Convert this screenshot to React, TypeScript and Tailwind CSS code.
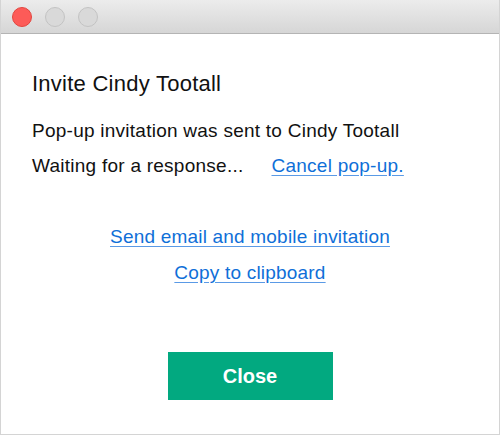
export default function App() {
  return (
    <div className="w-[500px] h-[435px] bg-white border-x border-b border-[#d4d4d4] font-['Liberation_Sans',Arial,sans-serif] text-[#111] flex flex-col">
      <div className="h-[34px] shrink-0 bg-gradient-to-b from-[#ececec] to-[#d6d6d6] border-b border-[#b4b4b4] flex items-center gap-[13px] pl-[11px]">
        <span className="w-[20px] h-[20px] rounded-full bg-[#fd5b58] border border-[#e2463f]" />
        <span className="w-[20px] h-[20px] rounded-full bg-[#d9d9d9] border border-[#c3c3c3]" />
        <span className="w-[20px] h-[20px] rounded-full bg-[#d9d9d9] border border-[#c3c3c3]" />
      </div>

      <div className="flex flex-col flex-1 pt-[37px]">
        <div className="px-[31px]">
          <h1 className="text-[22px] leading-[26px] tracking-[0.25px]">Invite Cindy Tootall</h1>
          <p className="mt-[23px] text-[19px] leading-[22px] tracking-[0.25px]">
            Pop-up invitation was sent to Cindy Tootall
          </p>
          <div className="mt-[13px] flex text-[19px] leading-[22px] tracking-[0.25px]">
            <span>Waiting for a response...</span>
            <a
              href="#"
              className="ml-[28px] text-[#0f6fd8] underline decoration-[#5a9ae6] underline-offset-[3px]"
            >
              Cancel pop-up.
            </a>
          </div>
        </div>

        <div className="mt-[49px] flex flex-col items-center gap-[14px] text-[19px] leading-[22px] tracking-[0.2px]">
          <a
            href="#"
            className="text-[#0f6fd8] underline decoration-[#5a9ae6] underline-offset-[3px]"
          >
            Send email and mobile invitation
          </a>
          <a
            href="#"
            className="text-[#0f6fd8] underline decoration-[#5a9ae6] underline-offset-[3px]"
          >
            Copy to clipboard
          </a>
        </div>

        <div className="mt-[68px] flex justify-center">
          <button className="w-[165px] h-[48px] bg-[#02a980] text-white font-bold text-[20px]">
            Close
          </button>
        </div>
      </div>
    </div>
  );
}
